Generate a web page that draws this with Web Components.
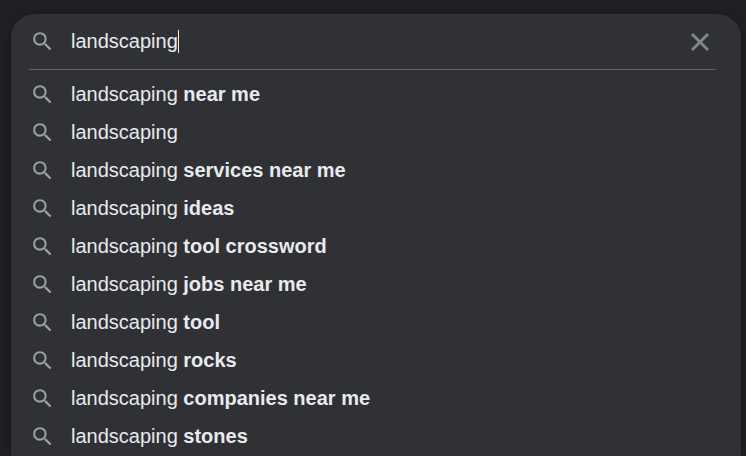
<!DOCTYPE html>
<html>
<head>
<meta charset="utf-8">
<title>landscaping</title>
<style>
  html, body { margin: 0; height: 456px; overflow: hidden; background: #202124; }
  body { font-family: "Liberation Sans", Arial, sans-serif; }
</style>
</head>
<body>
<search-panel>
  <search-box value="landscaping"></search-box>
  <suggestion-row>near me</suggestion-row>
  <suggestion-row></suggestion-row>
  <suggestion-row>services near me</suggestion-row>
  <suggestion-row>ideas</suggestion-row>
  <suggestion-row>tool crossword</suggestion-row>
  <suggestion-row>jobs near me</suggestion-row>
  <suggestion-row>tool</suggestion-row>
  <suggestion-row>rocks</suggestion-row>
  <suggestion-row>companies near me</suggestion-row>
  <suggestion-row>stones</suggestion-row>
</search-panel>

<script>
const SEARCH_ICON = `
  <svg width="25" height="25" viewBox="0 0 24 24" fill="#9aa0a6" aria-hidden="true">
    <path d="M15.5 14h-.79l-.28-.27A6.47 6.47 0 0 0 16 9.5 6.5 6.5 0 1 0 9.5 16c1.61 0 3.09-.59 4.23-1.57l.27.28v.79l5 4.99L20.49 19l-4.99-5zm-6 0C7.01 14 5 11.99 5 9.5S7.01 5 9.5 5 14 7.01 14 9.5 11.99 14 9.5 14z"/>
  </svg>`;

class SearchPanel extends HTMLElement {
  constructor() {
    super();
    this.attachShadow({ mode: "open" });
    this.shadowRoot.innerHTML = `
      <style>
        :host {
          display: block;
          margin: 14px 5px 0 11px;
          height: 442px;
          overflow: hidden;
          background: #303134;
          border-radius: 24px 24px 0 0;
          box-shadow: 0 0 12px rgba(0, 0, 0, 0.3);
        }
      </style>
      <slot></slot>
    `;
  }
}

class SearchBox extends HTMLElement {
  constructor() {
    super();
    this.attachShadow({ mode: "open" });
    this.shadowRoot.innerHTML = `
      <style>
        :host {
          display: block;
          padding-bottom: 5px;
          color: #e8eaed;
          font-size: 20px;
        }
        .row {
          display: flex;
          align-items: center;
          height: 55px;
          padding: 0 26px 0 19px;
        }
        .icon { display: flex; width: 41px; flex: none; }
        .value { flex: 1; display: flex; align-items: center; }
        .caret { width: 1px; height: 23px; background: #e8eaed; }
        .close { display: flex; }
        hr {
          height: 1px;
          margin: 0 25px 0 18px;
          border: none;
          background: #5f6368;
        }
      </style>
      <div class="row">
        <span class="icon">${SEARCH_ICON}</span>
        <span class="value"><span id="value"></span><span class="caret"></span></span>
        <span class="close">
          <svg width="30" height="30" viewBox="0 0 24 24" fill="#80868b" stroke="#80868b" stroke-width="0.4" aria-hidden="true">
            <path d="M19 6.41 17.59 5 12 10.59 6.41 5 5 6.41 10.59 12 5 17.59 6.41 19 12 13.41 17.59 19 19 17.59 13.41 12z"/>
          </svg>
        </span>
      </div>
      <hr>
    `;
  }

  connectedCallback() {
    this.shadowRoot.querySelector("#value").textContent = this.getAttribute("value");
  }
}

class SuggestionRow extends HTMLElement {
  constructor() {
    super();
    this.attachShadow({ mode: "open" });
    this.shadowRoot.innerHTML = `
      <style>
        :host {
          display: flex;
          align-items: center;
          height: 38px;
          padding-left: 19px;
          color: #e8eaed;
          font-size: 20px;
          white-space: pre;
        }
        .icon { display: flex; width: 41px; flex: none; }
        b { font-weight: bold; }
      </style>
      <span class="icon">${SEARCH_ICON}</span>
      <span>landscaping <b><slot></slot></b></span>
    `;
  }
}

customElements.define("search-panel", SearchPanel);
customElements.define("search-box", SearchBox);
customElements.define("suggestion-row", SuggestionRow);
</script>
</body>
</html>
